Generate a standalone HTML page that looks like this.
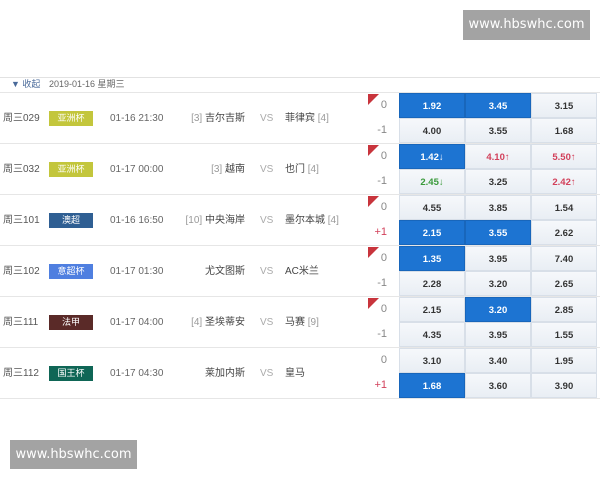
<!DOCTYPE html>
<html><head><meta charset="utf-8"><style>
*{margin:0;padding:0;box-sizing:border-box}
body{width:600px;height:480px;background:#fff;position:relative;overflow:hidden;font-family:"Liberation Sans","Noto Sans CJK SC",sans-serif;font-size:10px;color:#444}
.a{position:absolute;white-space:nowrap;line-height:13px}
.wm{position:absolute;background:#a3a3a3;color:#fff;font-size:13px;text-align:center;line-height:29px;font-family:"DejaVu Sans","Liberation Sans",sans-serif}
.row{position:absolute;left:0;width:600px;height:51px;border-bottom:1px solid #e6e6e6}
.id{left:3px;top:19px;color:#555}
.bd{left:49px;top:18px;width:44px;height:15px;color:#fff;font-size:9px;text-align:center;line-height:15px}
.tm{left:110px;top:19px;color:#666}
.hm{right:355px;top:19px;color:#444}
.vs{left:260px;top:19px;color:#aaa}
.aw{left:285px;top:19px;color:#444}
.br{color:#999}
.hc{right:213px;color:#888;font-size:11px}
.tri{position:absolute;left:368px;top:1px;width:0;height:0;border-top:11px solid #c8343c;border-right:11px solid transparent}
.c{position:absolute;height:25px;text-align:center;line-height:25px;font-size:9.5px;color:#333;background:linear-gradient(#f6f8fb,#e9eef4);border:1px solid #d8dfe8;font-weight:bold}
.b{background:#1d74d2;color:#fff;border-color:#1866bb}
.r{color:#d2405a}.g{color:#3a9a3a}
.c1{left:399px;width:66px}.c2{left:465px;width:66px}.c3{left:531px;width:66px}
.u{top:0}.l{top:25px}
</style></head><body>
<div class="wm" style="left:463px;top:10px;width:127px;height:30px">www.hbswhc.com</div>
<div class="wm" style="left:10px;top:440px;width:127px;height:29px">www.hbswhc.com</div>
<div class="a" style="left:0;top:77px;width:600px;border-top:1px solid #e2e2e2"></div>
<div class="a" style="left:11px;top:78px;font-size:9px;color:#4a6a9a">▼ 收起</div>
<div class="a" style="left:49px;top:78px;font-size:9px;color:#666">2019-01-16 星期三</div>
<div class="a" style="left:0;top:92px;width:600px;border-top:1px solid #e6e6e6"></div>

<div class="row" style="top:93px">
<span class="a id">周三029</span><span class="a bd" style="background:#c3c63c">亚洲杯</span><span class="a tm">01-16 21:30</span>
<span class="a hm"><span class="br">[3]</span> 吉尔吉斯</span><span class="a vs">VS</span><span class="a aw">菲律宾 <span class="br">[4]</span></span>
<span class="tri"></span><span class="a hc" style="top:6px">0</span><span class="a hc" style="top:31px">-1</span>
<div class="c c1 u b">1.92</div><div class="c c2 u b">3.45</div><div class="c c3 u">3.15</div>
<div class="c c1 l">4.00</div><div class="c c2 l">3.55</div><div class="c c3 l">1.68</div>
</div>

<div class="row" style="top:144px">
<span class="a id">周三032</span><span class="a bd" style="background:#c3c63c">亚洲杯</span><span class="a tm">01-17 00:00</span>
<span class="a hm"><span class="br">[3]</span> 越南</span><span class="a vs">VS</span><span class="a aw">也门 <span class="br">[4]</span></span>
<span class="tri"></span><span class="a hc" style="top:6px">0</span><span class="a hc" style="top:31px">-1</span>
<div class="c c1 u b">1.42↓</div><div class="c c2 u r">4.10↑</div><div class="c c3 u r">5.50↑</div>
<div class="c c1 l g">2.45↓</div><div class="c c2 l">3.25</div><div class="c c3 l r">2.42↑</div>
</div>

<div class="row" style="top:195px">
<span class="a id">周三101</span><span class="a bd" style="background:#2f5f93">澳超</span><span class="a tm">01-16 16:50</span>
<span class="a hm"><span class="br">[10]</span> 中央海岸</span><span class="a vs">VS</span><span class="a aw">墨尔本城 <span class="br">[4]</span></span>
<span class="tri"></span><span class="a hc" style="top:6px">0</span><span class="a hc r" style="top:31px">+1</span>
<div class="c c1 u">4.55</div><div class="c c2 u">3.85</div><div class="c c3 u">1.54</div>
<div class="c c1 l b">2.15</div><div class="c c2 l b">3.55</div><div class="c c3 l">2.62</div>
</div>

<div class="row" style="top:246px">
<span class="a id">周三102</span><span class="a bd" style="background:#4f7fe0">意超杯</span><span class="a tm">01-17 01:30</span>
<span class="a hm">尤文图斯</span><span class="a vs">VS</span><span class="a aw">AC米兰</span>
<span class="tri"></span><span class="a hc" style="top:6px">0</span><span class="a hc" style="top:31px">-1</span>
<div class="c c1 u b">1.35</div><div class="c c2 u">3.95</div><div class="c c3 u">7.40</div>
<div class="c c1 l">2.28</div><div class="c c2 l">3.20</div><div class="c c3 l">2.65</div>
</div>

<div class="row" style="top:297px">
<span class="a id">周三111</span><span class="a bd" style="background:#5a2a28">法甲</span><span class="a tm">01-17 04:00</span>
<span class="a hm"><span class="br">[4]</span> 圣埃蒂安</span><span class="a vs">VS</span><span class="a aw">马赛 <span class="br">[9]</span></span>
<span class="tri"></span><span class="a hc" style="top:6px">0</span><span class="a hc" style="top:31px">-1</span>
<div class="c c1 u">2.15</div><div class="c c2 u b">3.20</div><div class="c c3 u">2.85</div>
<div class="c c1 l">4.35</div><div class="c c2 l">3.95</div><div class="c c3 l">1.55</div>
</div>

<div class="row" style="top:348px">
<span class="a id">周三112</span><span class="a bd" style="background:#0f6656">国王杯</span><span class="a tm">01-17 04:30</span>
<span class="a hm">莱加内斯</span><span class="a vs">VS</span><span class="a aw">皇马</span>
<span class="a hc" style="top:6px">0</span><span class="a hc r" style="top:31px">+1</span>
<div class="c c1 u">3.10</div><div class="c c2 u">3.40</div><div class="c c3 u">1.95</div>
<div class="c c1 l b">1.68</div><div class="c c2 l">3.60</div><div class="c c3 l">3.90</div>
</div>
</body></html>
